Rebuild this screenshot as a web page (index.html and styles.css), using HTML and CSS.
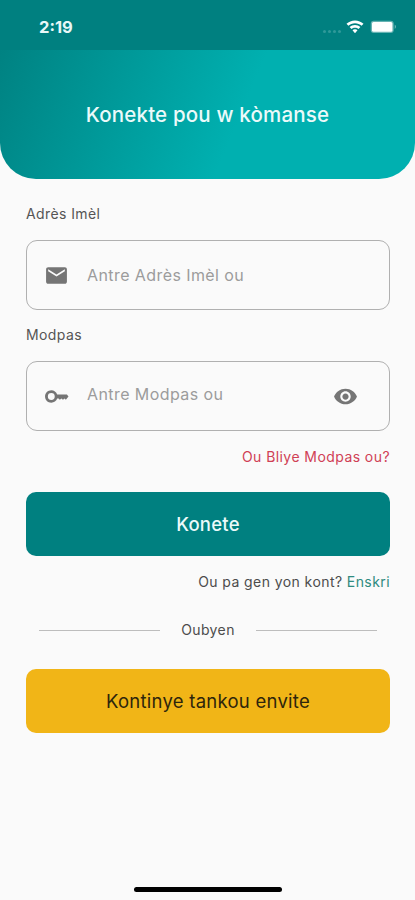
FILE: index.html
```html
<!DOCTYPE html>
<html lang="ht">
<head>
<meta charset="utf-8">
<meta name="viewport" content="width=device-width, initial-scale=1">
<title>Konekte</title>
<link rel="stylesheet" href="styles.css">
</head>
<body>
<div class="screen">
  <header class="hero">
    <div class="status">
      <span class="time">2:19</span>
      <div class="indicators">
        <span class="dots"><i></i><i></i><i></i><i></i></span>
        <svg class="wifi" viewBox="0 0 18 14" width="18" height="14"><path d="M9 0.400C5.700 0.400 2.700 1.700 0.500 3.800L2.400 5.800C4.100 4.200 6.400 3.200 9 3.200s4.900 1 6.600 2.600L17.500 3.800C15.300 1.700 12.300 0.400 9 0.400zM9 5C6.900 5 5 5.800 3.600 7.100L5.500 9C6.400 8.200 7.600 7.700 9 7.700s2.600.5 3.500 1.300l1.900-1.900C13 5.800 11.100 5 9 5zM9 9.300c-1 0-1.900.4-2.500 1L9 13.300l2.500-3C10.900 9.700 10 9.300 9 9.300z"/></svg>
        <svg class="battery" viewBox="0 0 27 14" width="27" height="14"><rect class="case" x="0.700" y="0.700" width="23" height="12.300" rx="3"/><rect x="2" y="2" width="20.400" height="9.700" rx="1.500"/><path class="tip" d="M24.700 4.600v4.500c1.800-.8 1.800-3.700 0-4.500z"/></svg>
      </div>
    </div>
    <h1 class="title">Konekte pou w kòmanse</h1>
  </header>
  <main class="form">
    <label class="label label-email">Adrès Imèl</label>
    <div class="field field-email">
      <svg class="icon" viewBox="0 0 24 24"><path d="M20 4H4c-1.100 0-2 .9-2 2v12c0 1.100.9 2 2 2h16c1.100 0 2-.9 2-2V6c0-1.100-.9-2-2-2zm0 4l-8 5-8-5V6l8 5 8-5v2z"/></svg>
      <span class="hint">Antre Adrès Imèl ou</span>
    </div>
    <label class="label label-password">Modpas</label>
    <div class="field field-password">
      <svg class="icon" viewBox="0 0 24 24"><path fill-rule="evenodd" d="M12.650 10C11.830 7.670 9.610 6 7 6c-3.310 0-6 2.690-6 6s2.690 6 6 6c2.610 0 4.830-1.670 5.650-4H14l1.200 1 1.500-1 1.500 1.200 1.600-1.200 1.200 1L23.500 12l-1.500-2H12.650zM7 15.300a3.300 3.300 0 1 1 0-6.600 3.300 3.300 0 0 1 0 6.600z"/></svg>
      <span class="hint hint-password">Antre Modpas ou</span>
      <svg class="icon eye" viewBox="0 0 24 24"><path d="M12 4.500C7 4.500 2.730 7.610 1 12c1.730 4.390 6 7.500 11 7.500s9.270-3.110 11-7.500c-1.730-4.390-6-7.500-11-7.500zM12 17c-2.760 0-5-2.240-5-5s2.240-5 5-5 5 2.240 5 5-2.240 5-5 5zm0-8c-1.660 0-3 1.340-3 3s1.340 3 3 3 3-1.340 3-3-1.340-3-3-3z"/></svg>
    </div>
    <a class="forgot">Ou Bliye Modpas ou?</a>
    <button class="btn btn-primary">Konete</button>
    <p class="signup">Ou pa gen yon kont? <a>Enskri</a></p>
    <div class="divider"><span>Oubyen</span></div>
    <button class="btn btn-guest">Kontinye tankou envite</button>
  </main>
  <div class="home-bar"></div>
</div>
</body>
</html>
```
FILE: styles.css
```css
* { box-sizing: border-box; }
body { margin: 0; font-family: Inter, "Liberation Sans", sans-serif; background: #fafafa; }
.screen { display: flex; flex-direction: column; height: 900px; overflow: hidden; }
.hero { height: 179px; flex: none; border-radius: 0 0 36px 36px; overflow: hidden; background: linear-gradient(113deg, #008080 2%, #00b0b0 59%); }
.status { display: flex; justify-content: space-between; height: 50px; padding: 17px 18.5px 0 39px; background: #008080; }
.time { font-size: 16.5px; line-height: 20px; font-weight: 700; color: #e8f8f8; }
.indicators { display: flex; align-items: flex-start; padding-top: 3px; }
.dots { display: flex; gap: 2px; padding: 10px 5px 0 0; }
.dots i { width: 3px; height: 3px; border-radius: 50%; background: #2f9999; }
.wifi { fill: #fff; margin-right: 6px; }
.battery { fill: #fff; }
.case { fill: #66b3b3; }
.tip { fill: #66b3b3; }
.title { margin: 53px 0 0; text-align: center; font-size: 20.5px; line-height: 24px; font-weight: 500; letter-spacing: 0.18px; color: #ebfafa; }
.form { display: flex; flex-direction: column; padding: 0 25px 0 26px; }
.label { font-size: 14px; line-height: 20px; letter-spacing: 0.4px; color: #555; }
.label-email { margin-top: 25px; }
.label-password { margin-top: 15px; }
.field { display: flex; align-items: center; height: 70px; padding: 0 31px 0 17px; border: 1px solid #b0b0b0; border-radius: 11px; }
.field-email { margin-top: 16px; }
.field-password { margin-top: 16px; }
.icon { width: 25px; height: 25px; flex: none; margin-right: 18px; fill: #757575; }
.eye { margin: 0 0 0 auto; }
.hint { font-size: 16px; line-height: 20px; letter-spacing: 0.42px; color: #9c9c9c; }
.hint-password { padding-bottom: 4px; }
.forgot { align-self: flex-end; margin-top: 16px; font-size: 14px; line-height: 20px; letter-spacing: 0.43px; color: #d04055; }
.btn { height: 64px; border: 0; border-radius: 10px; padding: 0; font-family: inherit; }
.btn-primary { margin-top: 25px; background: #008080; color: #ebfafa; font-size: 18.5px; font-weight: 500; letter-spacing: 0.25px; }
.signup { align-self: flex-end; margin: 16px 0 0; font-size: 14px; line-height: 20px; letter-spacing: 0.42px; color: #4c4c4c; }
.signup a { color: #2f8b7f; }
.divider { display: flex; align-items: center; gap: 21px; margin: 27px 13px 0; height: 20px; font-size: 14px; letter-spacing: 0.4px; color: #4c4c4c; }
.divider::before, .divider::after { content: ""; flex: 1; height: 1px; margin-top: 2px; background: #bdbdbd; }
.btn-guest { margin-top: 30px; background: #f1b517; color: #2e250c; font-size: 18.5px; letter-spacing: 0.25px; }
.home-bar { width: 148px; height: 5px; margin: auto auto 8px 134px; border-radius: 3px; background: #000; }
```
